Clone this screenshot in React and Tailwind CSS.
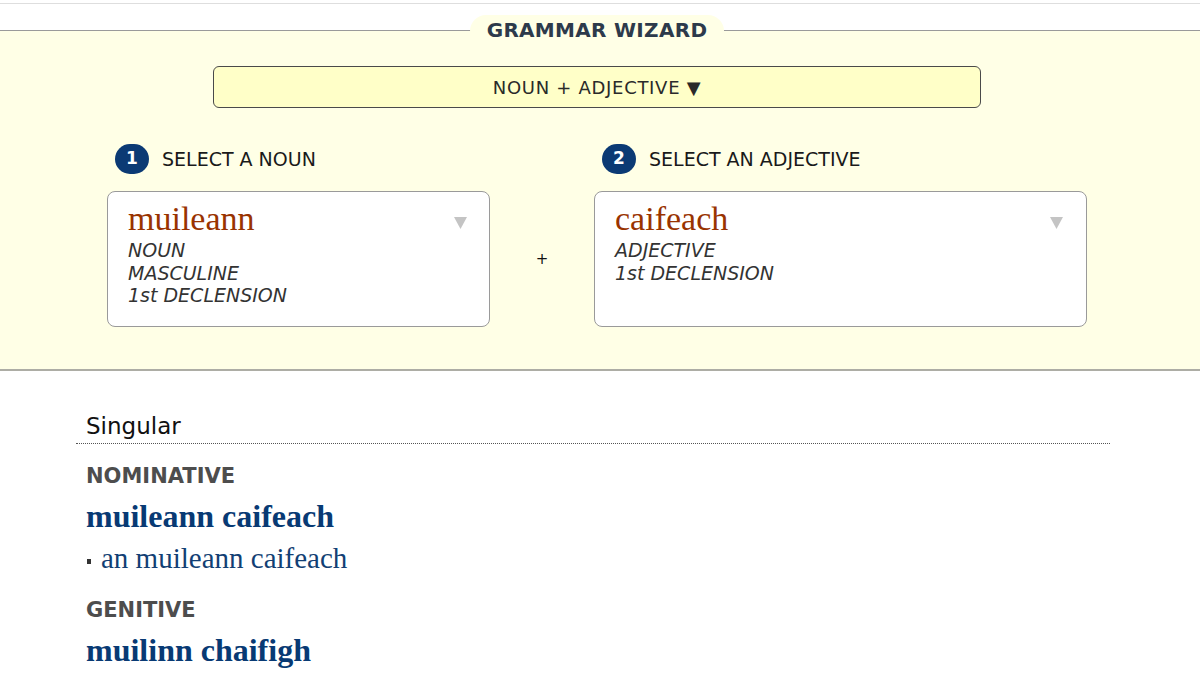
import React from "react";

const sans = { fontFamily: '"DejaVu Sans", Verdana, sans-serif' };

function Caret({ className = "" }) {
  return (
    <svg width="13" height="12" viewBox="0 0 13 12" className={className}>
      <path d="M0 0 H13 L6.5 12 Z" fill="#c4c4c4" />
    </svg>
  );
}

function Step({ n, label }) {
  return (
    <div className="flex h-[32px] items-center pl-[8px]">
      <div className="flex h-[30px] w-[34px] items-center justify-center rounded-full bg-[#0b3a74] text-[17px] font-bold text-white">
        {n}
      </div>
      <div className="ml-[13px] text-[19px] text-[#1a1a1a]">{label}</div>
    </div>
  );
}

function WordBox({ title, lines, arrowPr }) {
  return (
    <div
      className={`mt-[16px] h-[136px] rounded-[8px] border border-[#9a9a9a] bg-white pl-[20px] pt-[9px] ${arrowPr}`}
    >
      <div className="flex items-start justify-between">
        <div className="font-['Liberation_Serif',serif] text-[34px] leading-[36px] text-[#993300]">
          {title}
        </div>
        <Caret className="mt-[16px]" />
      </div>
      <div className="mt-[2px] text-[19px] italic leading-[22.5px] text-[#333333]">
        {lines.map((l) => (
          <div key={l}>{l}</div>
        ))}
      </div>
    </div>
  );
}

export default function App() {
  return (
    <div className="min-h-[675px] bg-white" style={sans}>
      <div className="h-[4px] border-b border-[#dedede]" />
      <div className="mt-[26px] border-t border-b-2 border-t-[#9a9a9a] border-b-[#adada5] bg-[#ffffe6] pb-[42px]">
        <div className="w-[1194px]">
          <div className="mx-auto -mt-[16px] flex h-[30px] w-fit items-center rounded-t-[16px] bg-[#ffffe6] px-[17px] text-[20px] font-bold tracking-[0.3px] text-[#2d3a4b]">
            GRAMMAR WIZARD
          </div>
          <div className="mx-auto mt-[21px] flex h-[42px] w-[768px] items-center justify-center rounded-[6px] border border-[#4a4a4a] bg-[#ffffc8] text-[18px] tracking-[0.7px] text-[#2a2a2a]">
            NOUN + ADJECTIVE ▼
          </div>
          <div className="mx-auto mt-[35px] flex w-[980px]">
            <div className="w-[383px]">
              <Step n="1" label="SELECT A NOUN" />
              <WordBox
                title="muileann"
                lines={["NOUN", "MASCULINE", "1st DECLENSION"]}
                arrowPr="pr-[22px]"
              />
            </div>
            <div className="flex w-[104px] items-center justify-center pt-[48px] text-[15px] text-[#111]">
              +
            </div>
            <div className="w-[493px]">
              <Step n="2" label="SELECT AN ADJECTIVE" />
              <WordBox
                title="caifeach"
                lines={["ADJECTIVE", "1st DECLENSION"]}
                arrowPr="pr-[23px]"
              />
            </div>
          </div>
        </div>
      </div>

      <div className="ml-[76px] w-[1034px]">
        <div className="mt-[40px] border-b border-dotted border-[#555] pb-[2px] pl-[10px] text-[23px] leading-[30px] text-[#111]">
          Singular
        </div>
        <div className="pl-[10px]">
          <div className="mt-[19px] text-[21px] font-bold leading-[26px] text-[#4d4d4d]">
            NOMINATIVE
          </div>
          <div className="mt-[9px] font-['Liberation_Serif',serif] text-[32px] font-bold leading-[36px] text-[#083a74]">
            muileann caifeach
          </div>
          <div className="mt-[7px] flex items-center font-['Liberation_Serif',serif] text-[29px] leading-[34px] text-[#123f74]">
            <span className="ml-[1px] mr-[10px] mt-[6px] inline-block h-[5px] w-[4px] bg-[#333]" />
            an muileann caifeach
          </div>
          <div className="mt-[22px] text-[21px] font-bold leading-[26px] text-[#4d4d4d]">
            GENITIVE
          </div>
          <div className="mt-[9px] font-['Liberation_Serif',serif] text-[32px] font-bold leading-[36px] text-[#083a74]">
            muilinn chaifigh
          </div>
        </div>
      </div>
    </div>
  );
}
